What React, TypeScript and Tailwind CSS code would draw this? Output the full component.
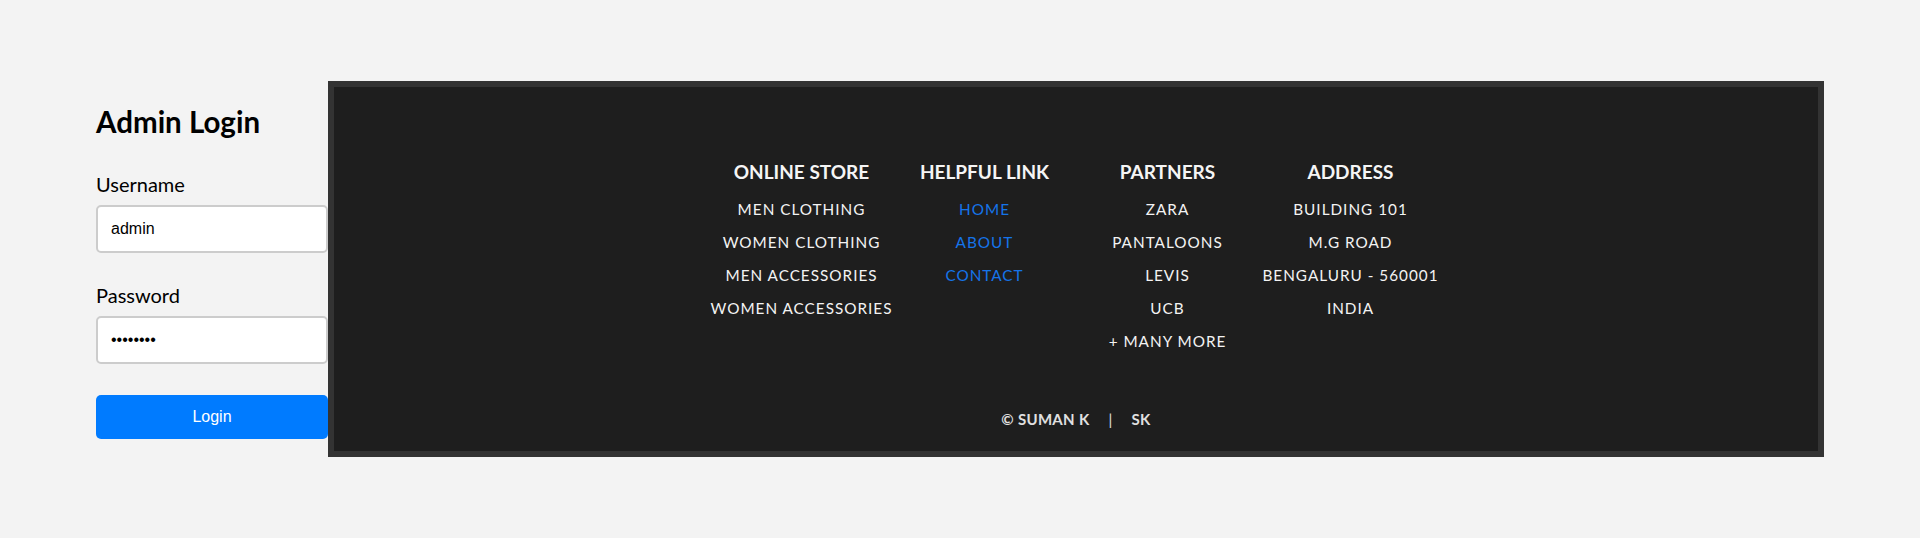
import { useState } from "react";

type Column = {
  title: string;
  items: string[];
  link?: boolean;
};

const columns: Column[] = [
  { title: "ONLINE STORE", items: ["MEN CLOTHING", "WOMEN CLOTHING", "MEN ACCESSORIES", "WOMEN ACCESSORIES"] },
  { title: "HELPFUL LINK", items: ["HOME", "ABOUT", "CONTACT"], link: true },
  { title: "PARTNERS", items: ["ZARA", "PANTALOONS", "LEVIS", "UCB", "+ MANY MORE"] },
  { title: "ADDRESS", items: ["BUILDING 101", "M.G ROAD", "BENGALURU - 560001", "INDIA"] },
];

function AdminLogin() {
  const [username, setUsername] = useState("admin");
  const [password, setPassword] = useState("password");

  return (
    <div className="w-[232px] shrink-0 pt-[23px] font-['Lato','Noto_Sans',sans-serif] text-black">
      <h2 className="text-[29.5px] font-bold leading-[35px]">Admin Login</h2>
      <label className="mt-[33px] block text-[20px] leading-[24px]">Username</label>
      <input
        className="mt-[9px] block h-[48px] w-full rounded-[5px] border-2 border-[#cccccc] bg-white px-[13px] font-['Liberation_Sans',Arial,sans-serif] text-[16px] text-black outline-none"
        value={username}
        onChange={(e) => setUsername(e.target.value)}
      />
      <label className="mt-[30px] block text-[20px] leading-[24px]">Password</label>
      <input
        type="password"
        className="mt-[9px] block h-[48px] w-full rounded-[5px] border-2 border-[#cccccc] bg-white px-[13px] font-['Liberation_Sans',Arial,sans-serif] text-[16px] text-black outline-none"
        value={password}
        onChange={(e) => setPassword(e.target.value)}
      />
      <button className="mt-[31px] block h-[44px] w-full rounded-[5px] bg-[#007bff] font-['Liberation_Sans',Arial,sans-serif] text-[16px] text-white">
        Login
      </button>
    </div>
  );
}

function Footer() {
  return (
    <footer className="h-[376px] w-[1496px] shrink-0 border-[6px] border-[#333333] bg-[#1e1e1e] font-['Lato','Noto_Sans',sans-serif]">
      <div className="flex justify-center pt-[73px]">
        {columns.map((col) => (
          <div key={col.title} className="w-[183px] text-center">
            <h3 className="text-[19px] font-bold leading-[23px] text-[#f5f5f5]">{col.title}</h3>
            <ul className="mt-[10px]">
              {col.items.map((item) => (
                <li
                  key={item}
                  className={`text-[15.3px] leading-[33px] tracking-[1px] ${col.link ? "text-[#1574ea]" : "text-[#f3f3f3]"}`}
                >
                  {item}
                </li>
              ))}
            </ul>
          </div>
        ))}
      </div>
      <div className="mt-[51px] flex justify-center text-[15px] font-bold leading-[20px] tracking-[0.3px] text-[#e0e0e0]">
        <span>© SUMAN K</span>
        <span className="mx-[19px] font-normal">|</span>
        <span>SK</span>
      </div>
    </footer>
  );
}

export default function App() {
  return (
    <div className="min-h-screen bg-[#f3f3f3] pl-[96px] pt-[81px]">
      <div className="flex items-start">
        <AdminLogin />
        <Footer />
      </div>
    </div>
  );
}
